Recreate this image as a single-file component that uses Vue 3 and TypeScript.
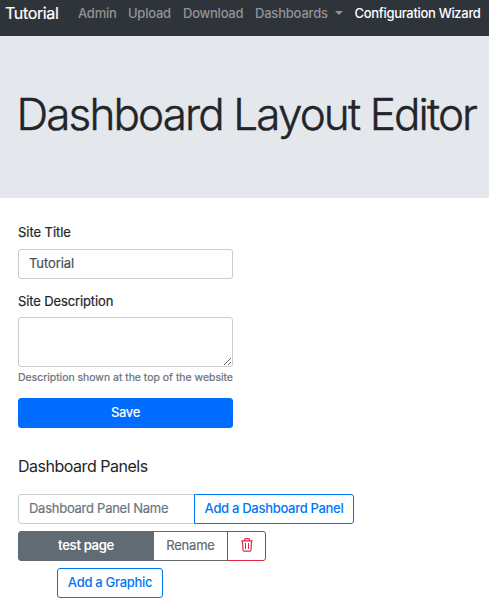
<script setup lang="ts">
import { ref } from 'vue'

interface NavItem {
  label: string
  key: string
  dropdown?: boolean
  active?: boolean
}

const navItems: NavItem[] = [
  { label: 'Admin', key: 'admin' },
  { label: 'Upload', key: 'upload' },
  { label: 'Download', key: 'download' },
  { label: 'Dashboards', key: 'dashboards', dropdown: true },
  { label: 'Configuration Wizard', key: 'wizard', active: true },
]

const siteTitle = ref('Tutorial')
const siteDescription = ref('')
const panelName = ref('')
</script>

<template>
  <div class="page">
    <nav class="navbar">
      <a class="brand">Tutorial</a>
      <a
        v-for="item in navItems"
        :key="item.key"
        class="nav-link"
        :class="[item.key, { active: item.active }]"
      ><span class="nav-text">{{ item.label }}</span><i v-if="item.dropdown" class="caret"></i></a>
    </nav>

    <header class="jumbotron">
      <h1>Dashboard Layout Editor</h1>
    </header>

    <main class="content">
      <form class="site-form" @submit.prevent>
        <label for="site-title" class="title-label">Site Title</label>
        <input id="site-title" v-model="siteTitle" class="control title-input" type="text" />
        <label for="site-description" class="description-label">Site Description</label>
        <textarea id="site-description" v-model="siteDescription" class="control area"></textarea>
        <small class="help">Description shown at the top of the website</small>
        <button class="btn save" type="submit">Save</button>
      </form>

      <h2>Dashboard Panels</h2>

      <div class="group add-row">
        <input v-model="panelName" class="control panel-name" type="text" placeholder="Dashboard Panel Name" />
        <button class="btn primary add-panel" type="button">Add a Dashboard Panel</button>
      </div>

      <div class="group panel-row">
        <button class="btn panel-title" type="button">test page</button>
        <button class="btn rename" type="button">Rename</button>
        <button class="btn delete" type="button" aria-label="Delete">
          <svg width="12" height="14" viewBox="0 0 12 14" fill="none" stroke="currentColor">
            <path d="M0.3 2.9H11.7M3.7 2.7V1.6Q3.7 .7 4.6 .7H7.4Q8.3 .7 8.3 1.6V2.7" stroke-width="1.2" />
            <path d="M1.5 3.2L2 12Q2.1 13.1 3.2 13.1H8.8Q9.9 13.1 10 12L10.5 3.2" stroke-width="1.2" />
            <path d="M4.5 5V11M7.5 5V11" stroke-width="1" />
          </svg>
        </button>
      </div>

      <button class="btn primary add-graphic" type="button">Add a Graphic</button>
    </main>
  </div>
</template>

<style>
body {
  margin: 0;
  background: #fff;
}
</style>

<style scoped>
.page,
.page * {
  box-sizing: border-box;
}
.page {
  width: 489px;
  height: 609px;
  overflow: hidden;
  font-family: Inter, "Liberation Sans", sans-serif;
  font-size: 13px;
  line-height: 20px;
  color: #212529;
}
.navbar {
  display: flex;
  align-items: flex-start;
  height: 36px;
  padding: 3px 0 0 5px;
  background: #2f343a;
  white-space: nowrap;
}
.brand {
  width: 73px;
  color: #fff;
  font-size: 16px;
  letter-spacing: -0.35px;
  -webkit-text-stroke: 0.2px currentColor;
}
.nav-link {
  display: flex;
  flex: none;
  color: #919396;
  font-weight: 450;
  letter-spacing: -0.25px;
}
.nav-link.admin { width: 50px; }
.nav-link.upload { width: 55px; }
.nav-link.download { width: 72px; }
.nav-link.dashboards {
  width: 99.5px;
  letter-spacing: -0.2px;
}
.nav-link.active {
  color: #fff;
  font-weight: 500;
  letter-spacing: -0.31px;
}
.caret {
  width: 0;
  height: 0;
  margin: 8px 0 0 7px;
  border: 4px solid transparent;
  border-top-color: currentColor;
  border-bottom: 0;
}
.jumbotron {
  height: 162px;
  padding: 50px 0 0 16.5px;
  background: #e4e7ec;
}
h1 {
  margin: 0;
  font-size: 44px;
  font-weight: 350;
  line-height: 56px;
  letter-spacing: -1.87px;
  white-space: nowrap;
  -webkit-text-stroke: 0.45px currentColor;
}
.content {
  padding: 24px 18px 0;
}
.site-form {
  display: flex;
  flex-direction: column;
  width: 215px;
}
.title-label,
.description-label {
  letter-spacing: -0.05px;
  -webkit-text-stroke: 0.2px currentColor;
}
.description-label {
  letter-spacing: -0.12px;
}
.control {
  display: block;
  height: 30px;
  margin: 0;
  padding: 0 10px 2px;
  border: 1px solid #c7cdd4;
  border-radius: 3px;
  outline: 0;
  background: #fff;
  color: #495057;
  font: inherit;
  -webkit-text-stroke: 0.2px currentColor;
}
.title-input {
  margin: 7px 0 12px;
  letter-spacing: -0.1px;
}
.area {
  height: 50px;
  margin: 6px 0 3px;
  resize: vertical;
}
.help {
  height: 15px;
  color: #68717a;
  font-size: 10.5px;
  line-height: 15px;
  letter-spacing: -0.02px;
  white-space: nowrap;
  -webkit-text-stroke: 0.2px currentColor;
}
.btn {
  display: flex;
  align-items: center;
  justify-content: center;
  height: 30px;
  margin: 0;
  padding: 0 0 2px;
  border: 1px solid currentColor;
  border-radius: 3px;
  background: #fff;
  font: inherit;
  white-space: nowrap;
}
.save {
  margin-top: 13px;
  border-color: #006dff;
  background: #006dff;
  color: #fff;
  font-weight: 500;
  letter-spacing: -0.3px;
}
h2 {
  margin: 28px 0 18px;
  font-size: 16px;
  font-weight: 400;
  line-height: 20px;
  letter-spacing: -0.48px;
}
.group {
  display: flex;
}
.panel-name {
  width: 177px;
  border-radius: 3px 0 0 3px;
  letter-spacing: -0.26px;
}
.panel-name::placeholder {
  color: #6c757d;
  opacity: 1;
}
.primary {
  color: #0075f5;
  font-weight: 500;
  letter-spacing: -0.3px;
}
.add-panel {
  width: 160px;
  margin-left: -1px;
  border-radius: 0 3px 3px 0;
}
.panel-row { margin-top: 7px; }
.panel-title {
  width: 136px;
  border-color: #606b73;
  border-radius: 3px 0 0 3px;
  background: #606b73;
  color: #fff;
  font-weight: 600;
  letter-spacing: -0.3px;
}
.rename {
  width: 75px;
  margin-left: -1px;
  border-radius: 0;
  color: #606b73;
  letter-spacing: -0.2px;
  -webkit-text-stroke: 0.2px currentColor;
}
.delete {
  width: 39px;
  margin-left: -1px;
  border-radius: 0 3px 3px 0;
  color: #dc2744;
}
.add-graphic {
  width: 106px;
  margin: 7px 0 0 39px;
}
</style>
